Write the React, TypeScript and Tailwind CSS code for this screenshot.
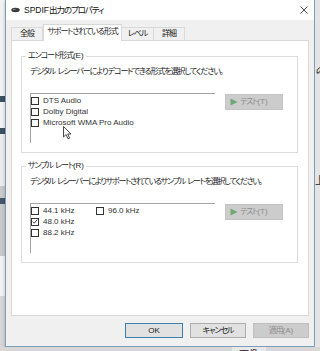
import React from "react";

const jpBase = "font-['Liberation_Sans','Noto_Sans_CJK_JP',sans-serif] [font-feature-settings:'palt']";
const jp = `${jpBase} tracking-[-1.1px]`;

function J({ t }: { t: string }) {
  const parts = t.split(/([\x20-\x7e]+)/).filter((p) => p.length > 0);
  return (
    <>
      {parts.map((p, i) =>
        /^[\x20-\x7e]+$/.test(p) ? (
          <span key={i} className="tracking-[0px] whitespace-pre">
            {p}
          </span>
        ) : (
          <span key={i}>{p}</span>
        )
      )}
    </>
  );
}

function Check({ checked = false }: { checked?: boolean }) {
  return (
    <div className="w-[8px] h-[8px] border border-[#333333] bg-white flex items-center justify-center shrink-0">
      {checked && (
        <svg width="7" height="7" viewBox="0 0 7 7">
          <path d="M0.8 3.6 L2.7 5.4 L6.2 1.2" fill="none" stroke="#222" strokeWidth="1" />
        </svg>
      )}
    </div>
  );
}

function Item({ label, checked = false }: { label: string; checked?: boolean }) {
  return (
    <div className="h-[11px] flex items-center gap-[4px]">
      <Check checked={checked} />
      <span className="text-[8px] leading-[10px] text-[#333333] whitespace-nowrap">{label}</span>
    </div>
  );
}

function TestButton() {
  return (
    <div className="mt-[1px] w-[58px] h-[16px] bg-[#cccccc] border border-[#c4c4c4] flex items-center pl-[4px] gap-[2px]">
      <svg width="8" height="8" viewBox="0 0 8 8">
        <path d="M0.5 0.5 L7.5 4 L0.5 7.5 Z" fill="#6fa874" />
      </svg>
      <span className={`${jp} text-[8px] leading-[10px] text-[#8c8c8c] whitespace-nowrap`}>
        <J t="テスト(T)" />
      </span>
    </div>
  );
}

function Group({
  legend,
  desc,
  descTrack,
  mt,
  children,
}: {
  legend: string;
  desc: string;
  descTrack: string;
  mt: string;
  children: React.ReactNode;
}) {
  return (
    <div className={`relative ${mt} h-[97px] border border-[#dcdcdc] px-[8px] pt-[10px]`}>
      <div className={`absolute left-[4px] top-[-6px] bg-white px-[2px] ${jp} text-[8px] leading-[10px] text-[#1a1a1a] whitespace-nowrap`}>
        <J t={legend} />
      </div>
      <div className={`${jpBase} ${descTrack} text-[8px] leading-[10px] text-[#1a1a1a] whitespace-nowrap`}>
        <J t={desc} />
      </div>
      <div className="mt-[16px] flex gap-[10px]">
        <div className="w-[185px] h-[50px] border-t border-l border-[#a6a6a6] pt-[1px] font-['Liberation_Sans',sans-serif]">
          {children}
        </div>
        <TestButton />
      </div>
    </div>
  );
}

export default function App() {
  return (
    <div className="relative w-[320px] h-[351px] overflow-hidden bg-[#dcdcdc] flex flex-col">
      <div className="flex h-[347px]">
        {/* left background strip */}
        <div className="w-[5px] flex flex-col">
          <div className="h-[96px] bg-[#f2f2f2]" />
          <div className="h-[6px] bg-[#3f4f62]" />
          <div className="h-[26px] bg-[#f2f2f2]" />
          <div className="h-[6px] bg-[#3f4f62]" />
          <div className="h-[52px] bg-[#ececec]" />
          <div className="h-[12px] bg-[#c9c9c9]" />
          <div className="h-[6px] bg-[#455568]" />
          <div className="h-[52px] bg-[#c9c9c9]" />
          <div className="h-[40px] bg-[#f2f2f2]" />
          <div className="flex-1 bg-[#d6d6d6]" />
        </div>

        {/* dialog */}
        <div className="w-[310px] h-[347px] border-x border-b border-[#7f9db6] bg-[#f0f0f0] flex flex-col shadow-[0_1px_3px_rgba(0,0,0,0.25)]">
          {/* title bar */}
          <div className="h-[20px] bg-white flex items-center pl-[5px] pr-[6px]">
            <svg width="9" height="6" viewBox="0 0 9 6">
              <ellipse cx="4.5" cy="3" rx="4.2" ry="2.2" fill="#3a3a3a" />
              <ellipse cx="3.2" cy="2.4" rx="1.4" ry="0.7" fill="#8a8a8a" />
            </svg>
            <span className={`ml-[4px] ${jp} text-[8.5px] leading-[12px] text-[#111]`}>
              <J t="SPDIF出力のプロパティ" />
            </span>
            <div className="flex-1" />
            <svg width="8" height="8" viewBox="0 0 8 8">
              <path d="M0.5 0.5 L7.5 7.5 M7.5 0.5 L0.5 7.5" stroke="#333" strokeWidth="0.9" />
            </svg>
          </div>

          {/* client */}
          <div className="flex-1 flex flex-col px-[5px]">
            {/* tabs */}
            <div className="h-[20px] flex items-end">
              <div className={`h-[13px] w-[32px] border border-b-0 border-[#d9d9d9] bg-[#f0f0f0] flex items-center justify-center ${jp} text-[8px] leading-[10px] text-[#1a1a1a]`}>
                全般
              </div>
              <div className={`relative z-10 mb-[-1px] h-[17px] w-[79px] border border-b-0 border-[#d9d9d9] bg-white flex items-center justify-center pb-[2px] ${jp} text-[8px] leading-[10px] text-[#1a1a1a] whitespace-nowrap`}>
                サポートされている形式
              </div>
              <div className={`h-[13px] w-[32px] border border-b-0 border-l-0 border-[#d9d9d9] bg-[#f0f0f0] flex items-center justify-center ${jp} text-[8px] leading-[10px] text-[#1a1a1a]`}>
                レベル
              </div>
              <div className={`h-[13px] w-[31px] border border-b-0 border-l-0 border-[#d9d9d9] bg-[#f0f0f0] flex items-center justify-center ${jp} text-[8px] leading-[10px] text-[#1a1a1a]`}>
                詳細
              </div>
            </div>

            {/* panel */}
            <div className="h-[276px] border border-[#d9d9d9] bg-white pl-[9px] pr-[10px]">
              <Group
                legend="エンコード形式(E)"
                desc="デジタル レシーバーによりデコードできる形式を選択してください。"
                descTrack="tracking-[-1.1px]"
                mt="mt-[15px]"
              >
                <Item label="DTS Audio" />
                <Item label="Dolby Digital" />
                <Item label="Microsoft WMA Pro Audio" />
              </Group>
              <Group
                legend="サンプル レート(R)"
                desc="デジタル レシーバーによりサポートされているサンプル レートを選択してください。"
                descTrack="tracking-[-1.25px]"
                mt="mt-[13px]"
              >
                <div className="grid grid-cols-[65px_1fr]">
                  <Item label="44.1 kHz" />
                  <Item label="96.0 kHz" />
                  <Item label="48.0 kHz" checked />
                  <div />
                  <Item label="88.2 kHz" />
                </div>
              </Group>
            </div>

            {/* buttons */}
            <div className="flex justify-end pt-[7px] gap-[7px]">
              <div className="w-[58px] h-[15px] bg-[#e1e1e1] border border-[#3c7fb1] flex items-center justify-center font-['Liberation_Sans',sans-serif] text-[8px] leading-[10px] text-[#1a1a1a]">
                OK
              </div>
              <div className={`w-[56px] h-[15px] bg-[#e1e1e1] border border-[#adadad] flex items-center justify-center ${jp} text-[8px] leading-[10px] text-[#1a1a1a]`}>
                キャンセル
              </div>
              <div className={`w-[56px] h-[15px] bg-[#cccccc] border border-[#bfbfbf] flex items-center justify-center ${jp} text-[8px] leading-[10px] text-[#8c8c8c]`}>
                <J t="適用(A)" />
              </div>
            </div>
          </div>
        </div>

        {/* right background strip */}
        <div className="w-[5px] bg-[#e4e4e4] flex flex-col overflow-hidden">
          <div className="h-[64px]" />
          <div className="font-['Noto_Sans_CJK_JP',sans-serif] text-[10px] leading-[12px] text-[#222] italic whitespace-nowrap">の</div>
          <div className="h-[98px]" />
          <div className="font-['Noto_Sans_CJK_JP',sans-serif] text-[10px] leading-[12px] text-[#222] whitespace-nowrap">上</div>
        </div>
      </div>

      {/* bottom strip */}
      <div className="flex-1 flex bg-[#d8d8d8] overflow-hidden">
        <div className="w-[232px]" />
        <div className="w-[34px] bg-[#e8e8e8] flex justify-center">
          <span className="font-['Noto_Sans_CJK_JP',sans-serif] text-[10px] leading-[12px] text-[#222] whitespace-nowrap mt-[1px]">画像</span>
        </div>
      </div>

      {/* mouse cursor */}
      <svg className="absolute left-[63px] top-[126px]" width="10" height="14" viewBox="0 0 10 14">
        <path
          d="M0.5 0.5 L0.5 11 L3 8.6 L5 12.8 L6.6 12.1 L4.7 8 L8 8 Z"
          fill="#ffffff"
          stroke="#333333"
          strokeWidth="0.9"
          strokeLinejoin="round"
        />
      </svg>
    </div>
  );
}
